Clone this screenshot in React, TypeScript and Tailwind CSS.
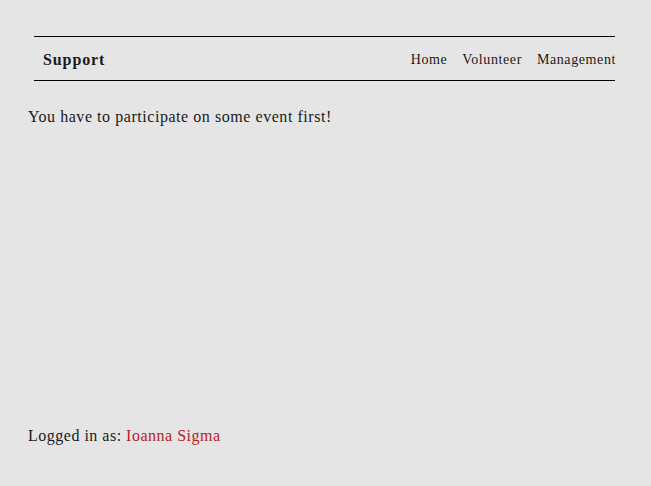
export default function App() {
  return (
    <div className="min-h-[486px] w-full bg-[#e5e5e5] text-[#1a1a1a] flex flex-col" style={{ fontFamily: '"Liberation Serif", serif' }}>
      <div className="pt-[36px] pl-[34px] pr-[36px]">
        <div className="border-t border-b border-black h-[45px] flex items-center justify-between pl-[9px] pt-[2px]">
          <span className="font-bold text-[16px] tracking-[0.9px]">Support</span>
          <nav className="flex gap-[15px] text-[14px] tracking-[0.6px] -mr-[1px]">
            <span>Home</span>
            <span>Volunteer</span>
            <span>Management</span>
          </nav>
        </div>
      </div>
      <p className="px-[28px] mt-[24px] text-[16px] tracking-[0.55px]">You have to participate on some event first!</p>
      <div className="flex-1" />
      <p className="px-[28px] pb-[38px] text-[16px] tracking-[0.5px]">
        Logged in as: <span className="text-[#b22222]">Ioanna Sigma</span>
      </p>
    </div>
  );
}
